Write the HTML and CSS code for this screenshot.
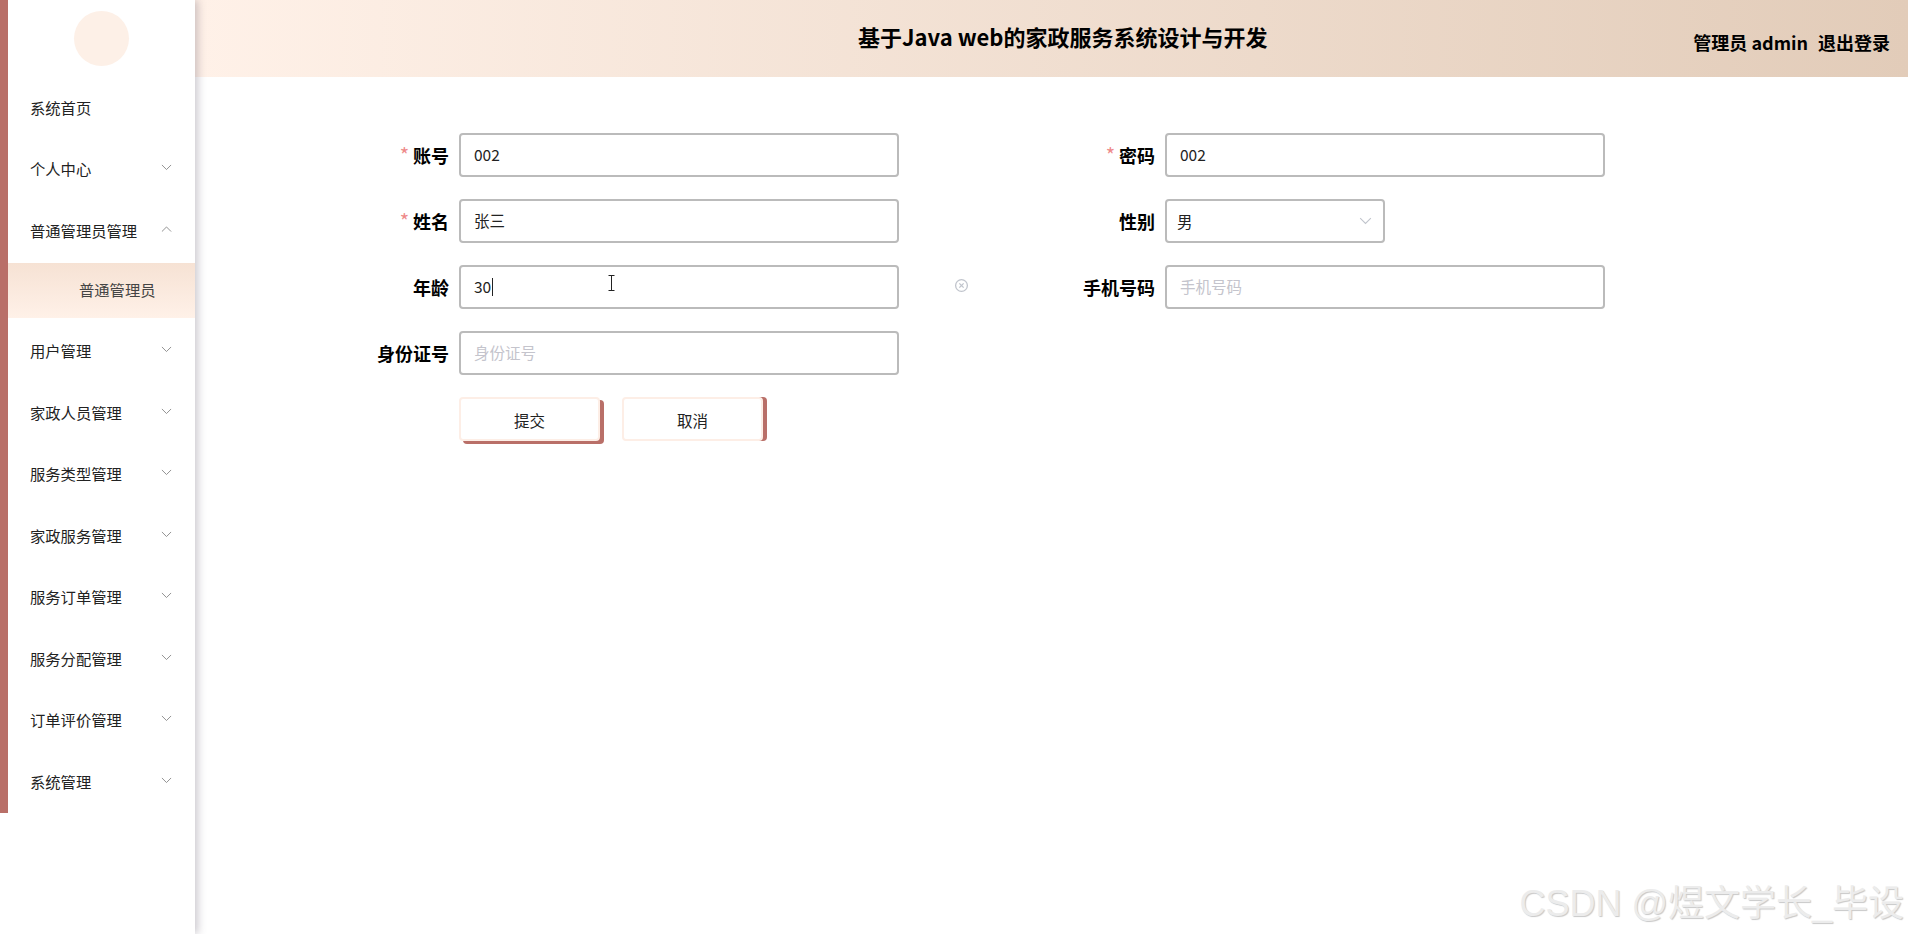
FILE: index.html
```html
<!DOCTYPE HTML>
<html>
<head>
<meta charset="utf-8">
<meta name="viewport" content="width=device-width,initial-scale=1.0">
<title>基于Java web的家政服务系统设计与开发</title>
<link rel="stylesheet" href="styles.css">
</head>
<body>
<div class="page">
  <aside class="side">
    <div class="nav">
      <div class="logoBox"><div class="logo"></div></div>
      <div class="menuItem"><span>系统首页</span></div>
      <div class="menuItem"><span>个人中心</span><svg class="arrow" viewBox="0 0 12 7"><path d="M1 1l5 5 5-5"/></svg></div>
      <div class="menuItem"><span>普通管理员管理</span><svg class="arrow" viewBox="0 0 12 7"><path d="M1 6l5-5 5 5"/></svg></div>
      <div class="subItem">普通管理员</div>
      <div class="menuItem"><span>用户管理</span><svg class="arrow" viewBox="0 0 12 7"><path d="M1 1l5 5 5-5"/></svg></div>
      <div class="menuItem"><span>家政人员管理</span><svg class="arrow" viewBox="0 0 12 7"><path d="M1 1l5 5 5-5"/></svg></div>
      <div class="menuItem"><span>服务类型管理</span><svg class="arrow" viewBox="0 0 12 7"><path d="M1 1l5 5 5-5"/></svg></div>
      <div class="menuItem"><span>家政服务管理</span><svg class="arrow" viewBox="0 0 12 7"><path d="M1 1l5 5 5-5"/></svg></div>
      <div class="menuItem"><span>服务订单管理</span><svg class="arrow" viewBox="0 0 12 7"><path d="M1 1l5 5 5-5"/></svg></div>
      <div class="menuItem"><span>服务分配管理</span><svg class="arrow" viewBox="0 0 12 7"><path d="M1 1l5 5 5-5"/></svg></div>
      <div class="menuItem"><span>订单评价管理</span><svg class="arrow" viewBox="0 0 12 7"><path d="M1 1l5 5 5-5"/></svg></div>
      <div class="menuItem"><span>系统管理</span><svg class="arrow" viewBox="0 0 12 7"><path d="M1 1l5 5 5-5"/></svg></div>
    </div>
  </aside>
  <div class="main">
    <header class="top">
      <div class="title">基于Java web的家政服务系统设计与开发</div>
      <div class="user"><span>管理员 admin</span><span>退出登录</span></div>
    </header>
    <div class="form">
      <div class="field">
        <label class="lbl"><i>*</i>账号</label>
        <div class="box">002</div>
      </div>
      <div class="field">
        <label class="lbl"><i>*</i>密码</label>
        <div class="box">002</div>
      </div>
      <div class="field">
        <label class="lbl"><i>*</i>姓名</label>
        <div class="box">张三</div>
      </div>
      <div class="field">
        <label class="lbl">性别</label>
        <div class="box selectBox"><span>男</span><svg class="selArrow" viewBox="0 0 12 7"><path d="M1 1l5 5 5-5"/></svg></div>
      </div>
      <div class="field">
        <label class="lbl">年龄</label>
        <div class="box ageBox">30<b class="caret"></b>
          <svg class="ibeam" viewBox="0 0 7 16"><path d="M0.5 0.5h6M3.5 0.5v15M0.5 15.5h6"/></svg>
        </div>
        <svg class="clear" viewBox="0 0 14 14"><circle cx="7" cy="7" r="5.5"/><path d="M5 5l4 4M9 5l-4 4"/></svg>
      </div>
      <div class="field">
        <label class="lbl">手机号码</label>
        <div class="box ph">手机号码</div>
      </div>
      <div class="field">
        <label class="lbl">身份证号</label>
        <div class="box ph">身份证号</div>
      </div>
      <div class="field"></div>
      <div class="btns">
        <button class="btn btnOk">提交</button>
        <button class="btn btnNo">取消</button>
      </div>
    </div>
  </div>
</div>
<div class="mark">CSDN @煜文学长_毕设</div>
</body>
</html>
```

FILE: styles.css
```css
html, body { height: 100%; }
body { margin: 0; padding: 0; background: #fff; color: #000; font-family: "Noto Sans CJK SC", "Noto Sans", sans-serif; overflow: hidden; }
.page { display: flex; height: 934px; }

.side { width: 195px; flex: none; background: #fff; box-shadow: 3px 0 8px rgba(90, 80, 100, .3); position: relative; z-index: 2; }
.nav { height: 813px; border-left: 8px solid #b96f68; }
.logoBox { height: 76px; display: flex; justify-content: center; padding-top: 11px; box-sizing: border-box; }
.logo { width: 55px; height: 55px; border-radius: 50%; background: #fdf0e7; }
.menuItem { height: 61.5px; display: flex; align-items: center; justify-content: space-between; padding: 0 23px 0 22px; font-size: 15.3px; color: #222; }
.arrow { width: 11px; height: 6.5px; margin-top: -2px; fill: none; stroke: #888; stroke-width: 1; }
.subItem { height: 55px; margin: 2px 0; line-height: 53px; padding-left: 71px; font-size: 15.3px; color: #444; background: linear-gradient(180deg, #f6e2d4, #fff1e8); }

.main { flex: 1; min-width: 0; }
.top { height: 77px; display: flex; align-items: center; justify-content: space-between; padding: 0 18px 0 663px; background: linear-gradient(90deg, #fff1e8, #e2ccb9); }
.title { font-size: 22px; font-weight: 700; margin-top: -5px; }
.user { font-size: 18px; font-weight: 700; display: flex; gap: 10px; margin-top: 7px; }

.form { display: grid; grid-template-columns: 706px 706px; row-gap: 22px; padding: 56px 0 0 134px; }
.field { display: flex; align-items: center; height: 44px; }
.lbl { width: 120px; margin-right: 10px; text-align: right; font-size: 18px; font-weight: 700; flex: none; }
.lbl i { font-style: normal; font-weight: 400; font-size: 20px; line-height: 1; color: #ee8a8a; margin-right: 4px; }
.box { width: 440px; height: 44px; box-sizing: border-box; border: 2px solid #bbb; border-radius: 4px; padding-left: 13px; line-height: 38px; font-size: 15.5px; color: #222; flex: none; }
.ph { color: #c4c4cc; }
.selectBox { width: 220px; padding: 0 11px 0 10px; display: flex; align-items: center; justify-content: space-between; }
.selArrow { width: 13px; height: 7.5px; fill: none; stroke: #c0c4cc; stroke-width: 1; }
.ageBox { position: relative; }
.caret { display: inline-block; width: 1px; height: 18px; background: #222; vertical-align: -3px; margin-left: 1px; }
.ibeam { position: absolute; left: 147px; top: 8px; width: 7px; height: 16px; fill: none; stroke: #222; stroke-width: 1; }
.clear { width: 15px; height: 15px; margin-left: 55px; margin-top: -3px; fill: none; stroke: #c0c4cc; stroke-width: 1.2; flex: none; }

.btns { grid-column: 1 / 3; display: flex; gap: 22px; padding-left: 130px; }
.btn { width: 141px; height: 44px; box-sizing: border-box; background: #fff; border: 2px solid #fdeee6; border-radius: 4px; font-family: inherit; font-size: 15.5px; color: #222; padding: 2px 0 0; }
.btnOk { box-shadow: 4px 3px 0 #b96f68; }
.btnNo { box-shadow: 4px 0 0 #b96f68; }

.mark { position: absolute; right: 4px; bottom: 8px; z-index: 3; font-family: "Liberation Sans", "Noto Sans CJK SC", sans-serif; font-size: 36px; color: #ececec; text-shadow: 1px 1px 1px #c8c8c8; white-space: nowrap; }
```
